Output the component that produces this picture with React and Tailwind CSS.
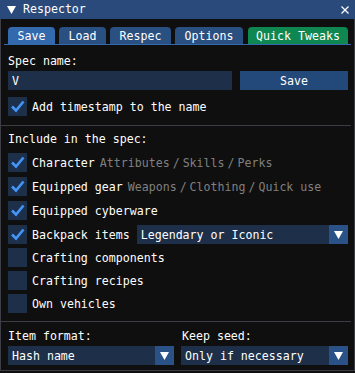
import React from "react";

const Arrow = ({ className = "" }) => (
  <svg width="9" height="8" viewBox="0 0 9 8" className={className}>
    <polygon points="0,0 9,0 4.5,8" fill="#ffffff" />
  </svg>
);

const Check = ({ checked }) => (
  <div className="w-[19px] h-[19px] bg-[#1d2f49] flex items-center justify-center shrink-0">
    {checked && (
      <svg width="19" height="19" viewBox="0 0 19 19">
        <polyline points="4,9.5 8,13.5 15.5,4.5" fill="none" stroke="#4296fa" strokeWidth="2.6" strokeLinecap="butt" strokeLinejoin="miter" />
      </svg>
    )}
  </div>
);

const Combo = ({ value, className = "" }) => (
  <div className={"h-[19px] bg-[#1d2f49] flex items-center " + className}>
    <div className="flex-1 pl-[4px] pt-px whitespace-nowrap">{value}</div>
    <div className="w-[19px] h-[19px] bg-[#2a5286] flex items-center justify-center">
      <Arrow />
    </div>
  </div>
);

const Row = ({ label, checked, extra, mt, children }) => (
  <div className={"flex items-center h-[19px] " + mt}>
    <Check checked={checked} />
    <span className="ml-[5px] pt-px whitespace-nowrap">{label}</span>
    {extra && (
      <div className="ml-[5px] pt-px flex gap-[3px] text-[#808080] whitespace-nowrap">
        {extra.map((w, i) => (
          <React.Fragment key={i}>
            {i > 0 && <span>/</span>}
            <span>{w}</span>
          </React.Fragment>
        ))}
      </div>
    )}
    {children}
  </div>
);

export default function App() {
  return (
    <div className="w-[355px] h-[373px] bg-[#0f0f0f] text-white font-['DejaVu_Sans_Mono','Liberation_Mono',monospace] text-[11.6px] leading-[13px]">
      <div className="h-[371px] border border-t-0 border-[#3d3d46] flex flex-col">
        {/* Title bar */}
        <div className="h-[19px] bg-[#294a7a] flex items-center -mx-px">
          <Arrow className="ml-[7px]" />
          <span className="ml-[7px]">Respector</span>
          <div className="flex-1" />
          <svg width="8" height="8" viewBox="0 0 8 8" className="mr-[6px]">
            <line x1="0.5" y1="0.5" x2="7.5" y2="7.5" stroke="#fff" strokeWidth="1.2" />
            <line x1="7.5" y1="0.5" x2="0.5" y2="7.5" stroke="#fff" strokeWidth="1.2" />
          </svg>
        </div>

        <div className="pl-[7px] pr-[6px] flex flex-col">
          {/* Tabs */}
          <div className="mt-[8px] flex h-[17px]">
            <div className="w-[47px] bg-[#3369ad] rounded-t-[4px] flex items-center justify-center pt-px">Save</div>
            <div className="ml-[4px] w-[47px] bg-[#2a4f81] rounded-t-[4px] flex items-center justify-center pt-px">Load</div>
            <div className="ml-[4px] w-[61px] bg-[#2a4f81] rounded-t-[4px] flex items-center justify-center pt-px">Respec</div>
            <div className="ml-[4px] w-[68px] bg-[#2a4f81] rounded-t-[4px] flex items-center justify-center pt-px">Options</div>
            <div className="ml-[5px] w-[100px] bg-[#0f8751] rounded-t-[4px] flex items-center justify-center whitespace-nowrap pt-px">Quick Tweaks</div>
          </div>
          <div className="h-[1px] bg-[#3369ad] -ml-[4px] -mr-[3px]" />

          <div className="mt-[10px] h-[13px]">Spec name:</div>
          <div className="mt-[3px] flex h-[19px]">
            <div className="w-[224px] bg-[#1d2f49] flex items-center pl-[4px] pt-px">V</div>
            <div className="ml-[8px] flex-1 bg-[#23497a] flex items-center justify-center pt-px">Save</div>
          </div>
          <Row label="Add timestamp to the name" checked mt="mt-[7px]" />

          <div className="mt-[9px] h-[1px] bg-[#3d3d46] -ml-[7px] -mr-[3px]" />

          <div className="mt-[7px] h-[13px]">Include in the spec:</div>
          <Row label="Character" checked extra={["Attributes", "Skills", "Perks"]} mt="mt-[7px]" />
          <Row label="Equipped gear" checked extra={["Weapons", "Clothing", "Quick use"]} mt="mt-[5px]" />
          <Row label="Equipped cyberware" checked mt="mt-[5px]" />
          <Row label="Backpack items" checked mt="mt-[5px]">
            <Combo value="Legendary or Iconic" className="ml-[7px] flex-1" />
          </Row>
          <Row label="Crafting components" mt="mt-[4px]" />
          <Row label="Crafting recipes" mt="mt-[4px]" />
          <Row label="Own vehicles" mt="mt-[4px]" />

          <div className="mt-[8px] h-[1px] bg-[#3d3d46] -ml-[7px] -mr-[3px]" />

          <div className="mt-[8px] flex h-[13px]">
            <div className="w-[166px]">Item format:</div>
            <div className="ml-[8px]">Keep seed:</div>
          </div>
          <div className="mt-[3px] flex">
            <Combo value="Hash name" className="w-[166px]" />
            <Combo value="Only if necessary" className="ml-[7px] flex-1" />
          </div>
        </div>
      </div>
    </div>
  );
}
